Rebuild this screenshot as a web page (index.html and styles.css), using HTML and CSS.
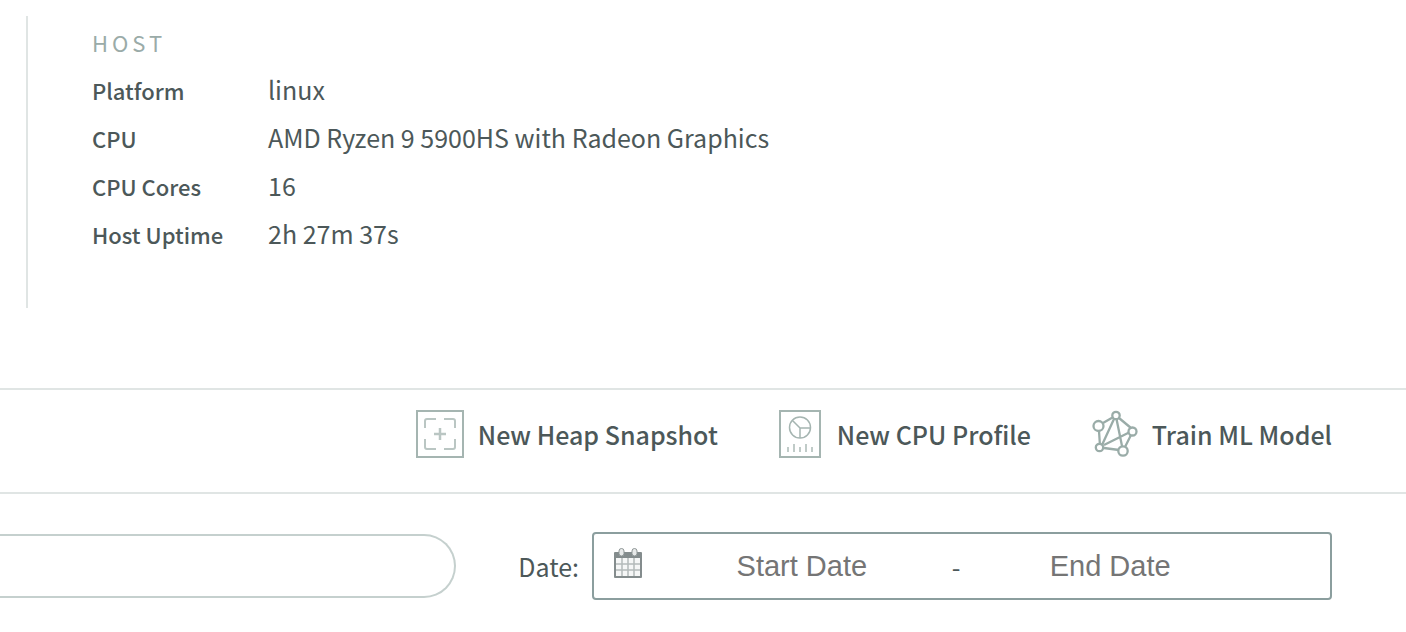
FILE: index.html
```html
<!DOCTYPE html>
<html lang="en">
<head>
<meta charset="utf-8">
<meta name="viewport" content="width=device-width, initial-scale=1">
<title>Process details</title>
<link rel="stylesheet" href="styles.css">
</head>
<body>
<section class="host">
  <h2 class="host-title">HOST</h2>
  <dl class="facts">
    <dt>Platform</dt><dd>linux</dd>
    <dt>CPU</dt><dd>AMD Ryzen 9 5900HS with Radeon Graphics</dd>
    <dt>CPU Cores</dt><dd>16</dd>
    <dt>Host Uptime</dt><dd>2h 27m 37s</dd>
  </dl>
</section>

<div class="toolbar">
  <button class="action" type="button">
    <svg width="48" height="48" viewBox="0 0 48 48" fill="none" stroke="#a5b5b1" stroke-width="2" aria-hidden="true">
      <path d="M1 1h46v46H1z"/>
      <path d="M9 18V11q0-2 2-2h9M28 9h9q2 0 2 2v7M39 29v8q0 2-2 2h-9M20 39h-9q-2 0-2-2v-8" stroke="#bac6c3"/>
      <path d="M24 18v12M18 24h12" stroke="#bac6c3" stroke-width="2.500"/>
    </svg>
    New Heap Snapshot
  </button>
  <button class="action action-profile" type="button">
    <svg width="42" height="48" viewBox="0 0 42 48" fill="none" stroke="#a5b5b1" aria-hidden="true">
      <path d="M1 1h40v46H1z" stroke-width="2"/>
      <circle cx="21" cy="17.500" r="10.500" stroke-width="1.500"/>
      <path d="M13.500 10.500L21 18h10.500M21 18v10" stroke-width="1.500"/>
      <path d="M9 37v5M15 34v8M21 37v5M27 34v8M33 37v5" stroke="#bac6c3" stroke-width="1.800"/>
    </svg>
    New CPU Profile
  </button>
  <button class="action" type="button">
    <svg width="46" height="48" viewBox="0 0 46 48" fill="none" stroke="#9aaca8" stroke-width="2.300" aria-hidden="true">
      <path d="M20.500 7.500L11 13M27 8l12 10M7 21l1 15M22 9L10 35M24.500 9L30 36M38 22L12 35M39 25l-6 12M12 38l15 2"/>
      <g fill="#fff">
        <circle cx="24" cy="5.500" r="3.700"/>
        <circle cx="6.500" cy="16" r="5"/>
        <circle cx="40.500" cy="21.500" r="4"/>
        <circle cx="7.500" cy="37.500" r="3.700"/>
        <circle cx="31" cy="41" r="4.700"/>
      </g>
    </svg>
    Train ML Model
  </button>
</div>

<form class="filters">
  <input class="search" type="search" aria-label="Search">
  <label class="date-label" for="start">Date:</label>
  <div class="range">
    <svg class="calendar" width="28" height="30" viewBox="0 0 28 30" aria-hidden="true">
      <path d="M0 5q0-1 1-1h26q1 0 1 1v24q0 1-1 1H1q-1 0-1-1z" fill="#848c8d"/>
      <path d="M2 10h24v18H2z" fill="#f6f7f7"/>
      <path d="M8 10v18M14 10v18M20 10v18M2 16h24M2 22h24" stroke="#b4baba" stroke-width="1.500"/>
      <g fill="#e7e9e9" stroke="#8d9595">
        <rect x="5" y=".5" width="5" height="7.500" rx="2.500"/>
        <rect x="18" y=".5" width="5" height="7.500" rx="2.500"/>
      </g>
    </svg>
    <input class="date" id="start" type="text" placeholder="Start Date">
    <span class="dash">-</span>
    <input class="date" type="text" placeholder="End Date" aria-label="End Date">
  </div>
</form>
</body>
</html>
```
FILE: styles.css
```css
* {
  box-sizing: border-box;
}

body {
  margin: 0;
  padding-top: 16px;
  background: #fff;
  color: #4c5859;
  font-family: "Noto Sans CJK SC", "Open Sans", sans-serif;
  font-size: 25px;
  line-height: 48px;
}

.host {
  margin: 0 26px 80px;
  padding: 2px 0 50px 64px;
  border-left: 2px solid #e0e5e4;
}

.host-title {
  margin: 0;
  color: #9aaba8;
  font-size: 22px;
  font-weight: 400;
  line-height: 48px;
  letter-spacing: 4px;
}

.facts {
  display: grid;
  grid-template-columns: 176px 1fr;
  margin: 0;
}

.facts dt {
  font-size: 22px;
  font-weight: 500;
}

.facts dd {
  margin: 0;
  line-height: 46px;
}

.toolbar {
  display: flex;
  justify-content: flex-end;
  gap: 61px;
  padding: 20px 74px 34px 0;
  border-top: 2px solid #e0e5e4;
  border-bottom: 2px solid #e0e5e4;
}

.action {
  display: flex;
  align-items: center;
  gap: 14px;
  padding: 0;
  border: 0;
  background: none;
  color: inherit;
  font: inherit;
  font-weight: 500;
  white-space: nowrap;
}

.action-profile {
  gap: 16px;
}

.filters {
  display: flex;
  align-items: center;
  padding: 38px 74px 32px 0;
}

.search {
  flex: 1;
  min-width: 0;
  height: 64px;
  margin: 0;
  padding: 0 32px;
  border: 2px solid #c5d0ce;
  border-left: 0;
  border-radius: 0 32px 32px 0;
  appearance: none;
  background: none;
  font: inherit;
}

.date-label {
  margin: 0 13px 0 62px;
}

.range {
  display: flex;
  align-items: center;
  width: 740px;
  height: 68px;
  padding: 0 70px 0 20px;
  border: 2px solid #8b9e9e;
  border-radius: 4px;
}

.calendar {
  margin: 0 10px 6px 0;
}

.date {
  flex: 1;
  min-width: 0;
  padding: 0;
  border: 0;
  background: none;
  font-family: "Liberation Sans", Arial, sans-serif;
  font-size: 29px;
  text-align: center;
}

.date::placeholder {
  color: #757575;
}
```
